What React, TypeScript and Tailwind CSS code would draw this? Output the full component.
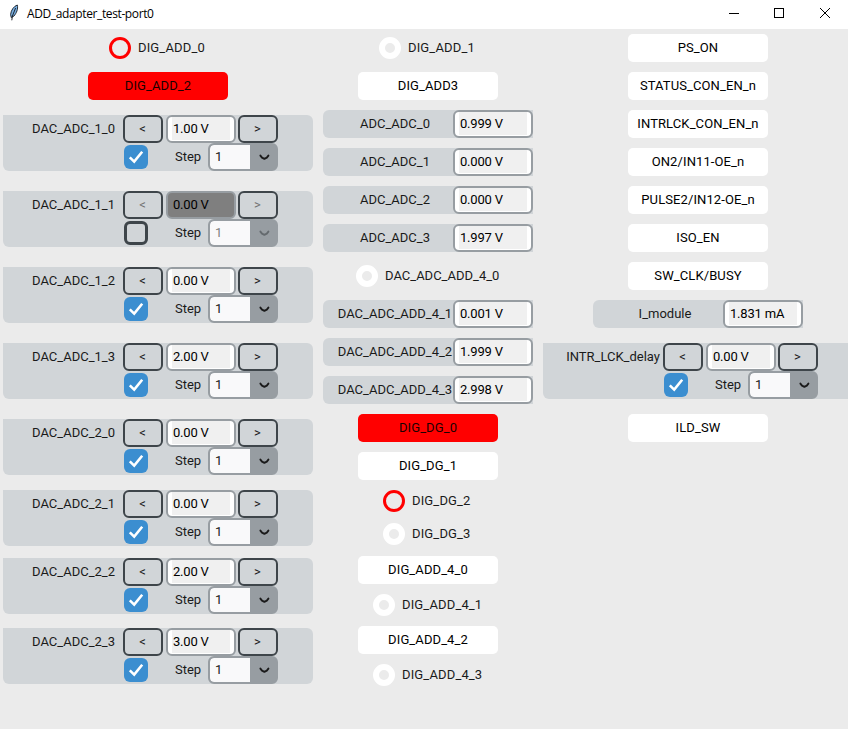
import React from "react";

const labelText = "block whitespace-nowrap text-[13px] leading-[28px]";

function Ring({ on }: { on?: boolean }) {
  return (
    <span
      className={
        on
          ? "block size-[22px] shrink-0 rounded-full border-[3px] border-[#ff0000]"
          : "block size-[22px] shrink-0 rounded-full border-[6px] border-white"
      }
    />
  );
}

function Indicator({
  label,
  on,
  tight,
  className,
}: {
  label: string;
  on?: boolean;
  tight?: boolean;
  className: string;
}) {
  return (
    <div className={`flex h-[22px] items-center gap-[7px] ${className}`}>
      <Ring on={on} />
      <span className={tight ? labelText : `${labelText} tracking-[0.15px]`}>{label}</span>
    </div>
  );
}

function PushButton({ label, on, className }: { label: string; on?: boolean; className: string }) {
  return (
    <button
      className={`block h-7 w-[140px] rounded-[5px] text-center text-[13px] leading-[28px] tracking-[0.1px] whitespace-nowrap ${
        on ? "bg-[#ff0000] text-[#1a0000]" : "bg-white text-black"
      } ${className}`}
    >
      {label}
    </button>
  );
}

function Entry({ value, wide, disabled }: { value: string; wide?: boolean; disabled?: boolean }) {
  return (
    <div
      className={`h-7 shrink-0 rounded-[6px] border-2 border-[#979da2] px-1 pb-px ${
        wide ? "w-20" : "w-[70px]"
      } ${disabled ? "bg-[#7f7f7f]" : "bg-white"}`}
    >
      <div
        className={`h-[23px] pl-px text-[13px] leading-[24px] tracking-[-0.2px] whitespace-nowrap text-black ${
          disabled ? "bg-[#7f7f7f]" : "bg-[#f0f0f0]"
        }`}
      >
        {value}
      </div>
    </div>
  );
}

function Reading({ label, value, className = "mt-[10px]" }: { label: string; value: string; className?: string }) {
  return (
    <div className={`flex h-7 w-[210px] rounded-l-[6px] bg-[#d1d5d8] ${className}`}>
      <div className="flex w-[130px] justify-center pl-[14px] text-[#1a1a1a]">
        <span className={labelText}>{label}</span>
      </div>
      <Entry value={value} wide />
    </div>
  );
}

function ArrowButton({ sign, disabled }: { sign: string; disabled?: boolean }) {
  return (
    <button
      className={`block h-7 w-10 shrink-0 rounded-[6px] border-2 border-[#3e454a] pr-px text-center text-[13px] leading-[24px] ${
        disabled ? "text-[#737373]" : "text-[#1a1a1a]"
      }`}
    >
      {sign}
    </button>
  );
}

function CheckBox({ checked }: { checked: boolean }) {
  if (!checked) {
    return <span className="block size-6 shrink-0 rounded-[6px] border-[3px] border-[#3e454a]" />;
  }
  return (
    <span className="block size-6 shrink-0 rounded-[6px] bg-[#3b8ed0]">
      <svg viewBox="0 0 24 24" className="size-6" fill="none" stroke="white" strokeWidth="2.6">
        <path d="M5.8 12.4 L10.2 16.6 L18.2 6.8" />
      </svg>
    </span>
  );
}

function StepSelect({ disabled }: { disabled?: boolean }) {
  return (
    <div className="flex h-7 w-[70px] shrink-0 overflow-hidden rounded-[6px] border-2 border-[#979da2] bg-[#979da2]">
      <div
        className={`w-10 rounded-l-[4px] bg-[#f9f9fa] pl-[5px] text-[13px] leading-[24px] ${
          disabled ? "text-[#7f7f7f]" : "text-[#1a1a1a]"
        }`}
      >
        1
      </div>
      <div className={disabled ? "text-[#646a6e]" : "text-[#1a1a1a]"}>
        <svg
          viewBox="0 0 26 24"
          className="h-6 w-[26px]"
          fill="none"
          stroke="currentColor"
          strokeWidth="1.9"
          strokeLinecap="round"
          strokeLinejoin="round"
        >
          <path d="M10.4 10.6 L12 12.6 L14.4 13.8 L16.8 12.6 L18.4 10.6" />
        </svg>
      </div>
    </div>
  );
}

function Spin({
  label,
  value,
  enabled = true,
  stretched,
  className,
}: {
  label: string;
  value: string;
  enabled?: boolean;
  stretched?: boolean;
  className: string;
}) {
  return (
    <div
      className={`h-14 bg-[#d1d5d8] text-[#1a1a1a] ${
        stretched ? "w-[305px] rounded-bl-[6px]" : "w-[310px] rounded-r-[6px] rounded-bl-[6px]"
      } ${className}`}
    >
      <div className="flex">
        <div className="flex w-[120px] shrink-0 justify-end pr-2">
          <span className={stretched ? `${labelText} -mr-[5px]` : labelText}>{label}</span>
        </div>
        <ArrowButton sign="<" disabled={!enabled} />
        <div className="ml-[3px]">
          <Entry value={value} disabled={!enabled} />
        </div>
        <div className="ml-0.5">
          <ArrowButton sign=">" disabled={!enabled} />
        </div>
      </div>
      <div className="flex pl-[121px]">
        <div className="pt-0.5">
          <CheckBox checked={enabled} />
        </div>
        <span className={`${labelText} ml-[27px] w-[33px]`}>Step</span>
        <StepSelect disabled={!enabled} />
      </div>
    </div>
  );
}

function TitleBar() {
  return (
    <header className="flex h-[29px] items-start bg-white text-black">
      <svg viewBox="0 0 16 20" className="mt-1 ml-[6px] h-5 w-4">
        <path d="M11.3 1 C8 2.2 5 6 4.6 10.5 L5.2 13.5 L8 12 C10.5 9 12.3 5 11.3 1Z" fill="#78aee0" stroke="#141820" strokeWidth="0.9" />
        <path d="M9.6 4 L6.4 12 L5.8 16.3" fill="none" stroke="#10151d" strokeWidth="0.9" />
      </svg>
      <h1 className="ml-[5px] font-['Open_Sans','Noto_Sans',sans-serif] text-[12px] leading-[28px] tracking-[-0.38px]">
        ADD_adapter_test-port0
      </h1>
      <svg viewBox="0 0 120 26" className="ml-auto h-[26px] w-[120px]" fill="none" stroke="black" strokeWidth="1">
        <path d="M1 13.5 H11" />
        <rect x="46.5" y="8.5" width="9" height="9" />
        <path d="M92 8 L102 18 M102 8 L92 18" />
      </svg>
    </header>
  );
}

export default function App() {
  return (
    <div className="h-[729px] w-[848px] overflow-hidden bg-[#ebebeb] font-[Roboto,sans-serif]">
      <TitleBar />
      <main className="flex pl-[3px] text-[#1a1a1a]">
        <section className="w-[310px]">
          <Indicator label="DIG_ADD_0" on className="mt-2 ml-[106px]" />
          <PushButton label="DIG_ADD_2" on className="mt-[13px] ml-[85px]" />
          <Spin label="DAC_ADC_1_0" value="1.00 V" className="mt-[15px]" />
          <Spin label="DAC_ADC_1_1" value="0.00 V" enabled={false} className="mt-5" />
          <Spin label="DAC_ADC_1_2" value="0.00 V" className="mt-5" />
          <Spin label="DAC_ADC_1_3" value="2.00 V" className="mt-5" />
          <Spin label="DAC_ADC_2_0" value="0.00 V" className="mt-5" />
          <Spin label="DAC_ADC_2_1" value="0.00 V" className="mt-[15px]" />
          <Spin label="DAC_ADC_2_2" value="2.00 V" className="mt-3" />
          <Spin label="DAC_ADC_2_3" value="3.00 V" className="mt-[14px]" />
        </section>
        <section className="ml-[10px] w-[210px]">
          <Indicator label="DIG_ADD_1" className="mt-2 ml-[56px]" />
          <PushButton label="DIG_ADD3" className="mt-[13px] ml-[35px]" />
          <Reading label="ADC_ADC_0" value="0.999 V" />
          <Reading label="ADC_ADC_1" value="0.000 V" />
          <Reading label="ADC_ADC_2" value="0.000 V" />
          <Reading label="ADC_ADC_3" value="1.997 V" />
          <Indicator label="DAC_ADC_ADD_4_0" tight className="mt-[13px] ml-[33px]" />
          <Reading label="DAC_ADC_ADD_4_1" value="0.001 V" className="mt-[13px]" />
          <Reading label="DAC_ADC_ADD_4_2" value="1.999 V" />
          <Reading label="DAC_ADC_ADD_4_3" value="2.998 V" />
          <PushButton label="DIG_DG_0" on className="mt-[10px] ml-[35px]" />
          <PushButton label="DIG_DG_1" className="mt-[10px] ml-[35px]" />
          <Indicator label="DIG_DG_2" on className="mt-[10px] ml-[60px]" />
          <Indicator label="DIG_DG_3" className="mt-[11px] ml-[60px]" />
          <PushButton label="DIG_ADD_4_0" className="mt-[11px] ml-[35px]" />
          <Indicator label="DIG_ADD_4_1" className="mt-[10px] ml-[50px]" />
          <PushButton label="DIG_ADD_4_2" className="mt-[10px] ml-[35px]" />
          <Indicator label="DIG_ADD_4_3" className="mt-[10px] ml-[50px]" />
        </section>
        <section className="ml-[10px] w-[305px]">
          <PushButton label="PS_ON" className="mt-[5px] ml-[85px]" />
          <PushButton label="STATUS_CON_EN_n" className="mt-[10px] ml-[85px]" />
          <PushButton label="INTRLCK_CON_EN_n" className="mt-[10px] ml-[85px]" />
          <PushButton label="ON2/IN11-OE_n" className="mt-[10px] ml-[85px]" />
          <PushButton label="PULSE2/IN12-OE_n" className="mt-[10px] ml-[85px]" />
          <PushButton label="ISO_EN" className="mt-[10px] ml-[85px]" />
          <PushButton label="SW_CLK/BUSY" className="mt-[10px] ml-[85px]" />
          <Reading label="I_module" value="1.831 mA" className="mt-[10px] ml-[50px]" />
          <Spin label="INTR_LCK_delay" value="0.00 V" stretched className="mt-[15px]" />
          <PushButton label="ILD_SW" className="mt-[15px] ml-[85px]" />
        </section>
      </main>
    </div>
  );
}
